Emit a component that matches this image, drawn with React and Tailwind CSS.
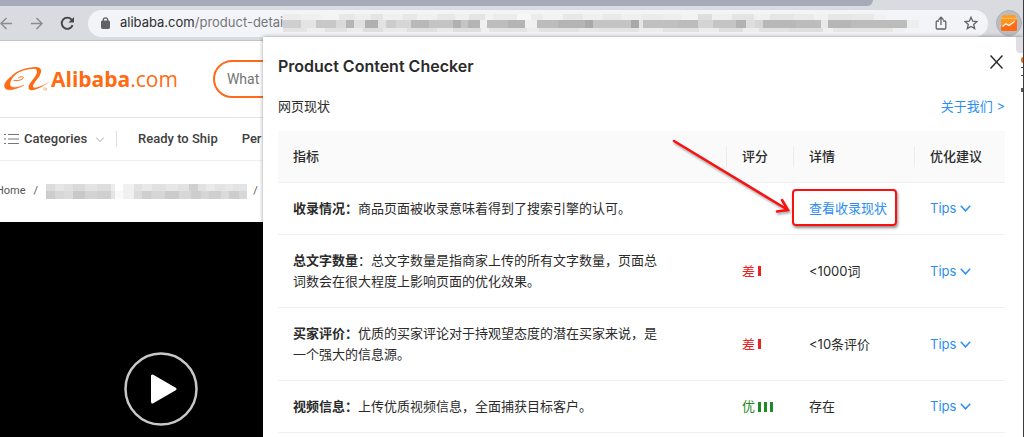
import React from 'react'
import clsx from 'clsx'

// [width, grey] runs of the hidden part of the address
const URL_TOP = [
  [18, 236], [20, 240], [18, 244], [16, 232], [16, 238], [12, 229], [20, 240], [14, 232], [20, 240], [18, 232],
  [14, 240], [16, 228], [8, 242], [24, 236], [14, 247], [12, 236], [20, 242], [20, 232], [20, 240], [18, 233],
  [20, 240], [22, 235], [18, 238], [17, 243], [14, 222], [20, 240], [22, 228], [16, 240], [24, 230], [20, 235],
  [14, 241], [24, 231], [22, 233], [12, 241],
]
const URL_MID = [
  [18, 207], [15, 228], [20, 200], [10, 217], [8, 181], [11, 224], [13, 176], [8, 226], [10, 204], [15, 214],
  [18, 184], [24, 196], [8, 176], [7, 196], [12, 180], [7, 240], [21, 189], [17, 180], [12, 240], [21, 188],
  [27, 180], [8, 170], [38, 196], [8, 168], [4, 229], [35, 192], [20, 188], [15, 212], [23, 196], [10, 178],
  [9, 222], [8, 214], [33, 184], [25, 188], [7, 232], [23, 182], [56, 188], [12, 238],
]
const URL_LOW = [
  [24, 228], [18, 238], [22, 226], [16, 236], [20, 222], [24, 234], [30, 224], [16, 234], [28, 222], [8, 240],
  [38, 228], [12, 236], [40, 226], [20, 232], [40, 228], [24, 236], [36, 226], [20, 236], [24, 222], [16, 238],
  [30, 226], [34, 222], [10, 240], [60, 230], [12, 241],
]
const CRUMB_TOP = [
  [9, 219], [9, 229], [9, 225], [12, 217], [12, 227], [14, 222], [4, 236], [8, 255], [11, 240], [8, 226],
  [10, 232], [14, 225], [12, 230], [11, 226], [9, 208], [8, 225], [9, 234], [10, 227], [8, 231], [14, 228],
]
const CRUMB_LOW = [
  [9, 204], [9, 215], [9, 219], [12, 200], [12, 211], [14, 207], [4, 229], [8, 249], [11, 240], [8, 219],
  [9, 206], [14, 214], [14, 203], [12, 215], [10, 205], [8, 214], [12, 207], [8, 218], [10, 205], [8, 216],
]

const ROWS = [
  { name: '收录情况：', text: '商品页面被收录意味着得到了搜索引擎的认可。', link: '查看收录现状' },
  {
    name: '总文字数量',
    text: '：总文字数量是指商家上传的所有文字数量，页面总词数会在很大程度上影响页面的优化效果。',
    grade: '差',
    bars: 1,
    detail: '<1000词',
  },
  {
    name: '买家评价：',
    text: '优质的买家评论对于持观望态度的潜在买家来说，是一个强大的信息源。',
    grade: '差',
    bars: 1,
    detail: '<10条评价',
  },
  { name: '视频信息：', text: '上传优质视频信息，全面捕获目标客户。', grade: '优', bars: 3, detail: '存在' },
]

function Mosaic({ runs, className }) {
  return (
    <div className={clsx('flex', className)}>
      {runs.map(([width, grey], i) => (
        <span key={i} style={{ width, backgroundColor: `rgb(${grey},${grey},${grey + 1})` }} />
      ))}
    </div>
  )
}

function Toolbar() {
  return (
    <div className="bg-[#d9dbe1] border-b border-[#c3c5ca]">
      <div className="h-[6px] mr-[150px] bg-[#a7abb9] rounded-br-md" />
      <div className="flex items-center h-[34px]">
        <button aria-label="Back" className="text-[#8b8d92]">
          <svg className="w-[13px] h-[13px]" viewBox="0 0 14 14" fill="none" stroke="currentColor" strokeWidth="1.6">
            <path d="M13 7H1M7 1L1 7l6 6" />
          </svg>
        </button>
        <button aria-label="Forward" className="ml-[17px] text-[#8b8d92]">
          <svg className="w-[13px] h-[13px]" viewBox="0 0 14 14" fill="none" stroke="currentColor" strokeWidth="1.6">
            <path d="M1 7h12M7 1l6 6-6 6" />
          </svg>
        </button>
        <button aria-label="Reload" className="ml-[17px] text-[#45474b]">
          <svg className="w-[15px] h-[15px]" viewBox="0 0 15 15" fill="none" stroke="currentColor" strokeWidth="1.9">
            <path d="M12.6 9.2A5.6 5.6 0 1 1 11.6 3.6L13 5" />
            <path d="M14 1v5.6H8.4z" fill="currentColor" stroke="none" />
          </svg>
        </button>
        <div className="flex flex-1 min-w-0 items-center h-[27px] ml-[13px] pl-[13px] pr-2.5 rounded-full bg-[#f3f4f7]">
          <svg className="w-[9px] h-3 shrink-0 text-[#5f6368]" viewBox="0 0 9 12" fill="none" stroke="currentColor">
            <rect x="0.5" y="4" width="8" height="7.5" rx="0.8" fill="currentColor" />
            <path d="M2.3 4.5V3a2.2 2.2 0 0 1 4.4 0v1.5" strokeWidth="1.3" />
          </svg>
          <div className="ml-2.5 shrink-0 text-[13px] text-[#74777b]">
            <span className="text-[#2c2e31]">alibaba.com</span>/product-detai
          </div>
          <div className="flex-1 min-w-0 overflow-hidden">
            <Mosaic runs={URL_TOP} className="h-1.5" />
            <Mosaic runs={URL_MID} className="h-2" />
            <Mosaic runs={URL_LOW} className="h-1" />
          </div>
          <button aria-label="Share" className="ml-2 text-[#5f6368]">
            <svg className="w-3 h-3.5" viewBox="0 0 12 14" fill="none" stroke="currentColor" strokeWidth="1.3">
              <path d="M4 5H2.2Q1.2 5 1.2 6v6q0 1 1 1h7.6q1 0 1-1V6q0-1-1-1H8M6 9V1.3M3.5 3.7L6 1.2l2.5 2.5" />
            </svg>
          </button>
          <button aria-label="Bookmark" className="ml-[17px] text-[#5f6368]">
            <svg className="w-3.5 h-3.5" viewBox="0 0 14 14" fill="none" stroke="currentColor" strokeWidth="1.3">
              <path d="M7 1.3l1.7 3.9 4.2.4-3.2 2.8 1 4.2L7 10.4l-3.7 2.2 1-4.2-3.2-2.8 4.2-.4z" />
            </svg>
          </button>
        </div>
        <button
          aria-label="Product Content Checker"
          className="flex items-center justify-center w-[26px] h-[26px] ml-2 mr-px rounded-full bg-[#bcbcbf] border border-[#afafb3]"
        >
          <svg className="w-4 h-4" viewBox="0 0 16 16">
            <path d="M2 0h12l2 4H0z" fill="#ff9f1f" />
            <rect width="16" height="12" y="3" rx="1" fill="#ff941c" />
            <path d="M0 12l5-3 3 2 6-5 2-1v10q0 1-1 1H1q-1 0-1-1z" fill="#ff6a13" />
            <path d="M0 3.6h16" stroke="#ffc57a" strokeWidth="0.8" />
            <path d="M1.5 11.5L5 8.8l3 1.7 5.8-4.2" fill="none" stroke="#fff" strokeWidth="1.2" />
          </svg>
        </button>
      </div>
    </div>
  )
}

function Storefront() {
  return (
    <div className="flex flex-1 flex-col font-[Roboto,sans-serif]">
      <header className="flex items-center h-[77px] pl-1 border-b border-[#e4e4e6]">
        <a href="#home" className="flex items-center text-[#ff6a12]">
          <svg className="w-[46px] h-[26px]" viewBox="0 0 46 26" fill="none" stroke="currentColor" strokeLinecap="round">
            <path
              d="M12 7.500C5 11-1 17.500.8 21.500c1.700 4.200 11 2.300 19.200-2.500C13 22 6 22.500 6 18.500c0-4 3-8 6-11z"
              fill="currentColor"
              strokeWidth="0.400"
            />
            <path d="M9 9.500C14 5 23 1.500 32 2" strokeWidth="1.500" />
            <path d="M10 14.500c4 .5 8.500-.5 9.500-3-1-1.300-3.500-.8-5 .3" strokeWidth="1" />
            <path
              d="M28 1.200C36 0 39 3 36 9c-2.500 4.500-6.500 8-7 11-.4 3.500 7 1.500 16.500-4.500C36 23.500 24.500 27 24.500 21.500c0-4 6-9 8-13.500 1.300-3.500 0-5.500-4.500-6.800z"
              fill="currentColor"
              stroke="none"
            />
            <circle cx="41" cy="23" r="1.300" strokeWidth="0.600" strokeOpacity="0.700" />
          </svg>
          <span className="ml-px text-[21px] leading-6 font-['Open_Sans',sans-serif]">
            <b>Alibaba</b>.com
          </span>
        </a>
        <input
          type="text"
          aria-label="Search products"
          placeholder="What"
          className="flex-1 min-w-0 h-[38px] ml-[35px] pl-3 rounded-l-full border-2 border-[#ff6a1a] text-sm placeholder:text-[#747474]"
        />
      </header>
      <nav className="flex items-center h-[43px] pl-1 border-b border-[#f0f0f1] text-[13px] font-medium text-[#404040]">
        <button className="flex items-center">
          <svg className="w-[15px] h-3 text-[#777]" viewBox="0 0 15 12" stroke="currentColor">
            <path d="M0 1.500h2M4 1.500h11M0 6h2M4 6h11M0 10.500h2M4 10.500h11" />
          </svg>
          <span className="ml-[5px]">Categories</span>
          <svg className="w-2 h-[5px] ml-[9px]" viewBox="0 0 8 5" fill="none" stroke="#a5a8ad">
            <path d="M0 .5l4 4 4-4" />
          </svg>
        </button>
        <span className="w-px h-4 ml-3 bg-[#dddde4]" />
        <a href="#ready" className="ml-[21px]">Ready to Ship</a>
        <a href="#personal" className="ml-6">Per</a>
      </nav>
      <div className="flex items-center h-[61px] -ml-1 text-[11px] text-[#555]">
        <a href="#home">Home</a>
        <span className="ml-2">/</span>
        <div className="ml-2">
          <Mosaic runs={CRUMB_TOP} className="h-[7px]" />
          <Mosaic runs={CRUMB_LOW} className="h-2" />
        </div>
        <span className="ml-1.5">/</span>
      </div>
      <div className="flex-1 w-[700px] max-w-full pt-[130px] pl-[124px] bg-black">
        <button aria-label="Play video" className="block">
          <svg className="w-[74px] h-[74px]" viewBox="0 0 74 74">
            <circle cx="37" cy="37" r="35.500" fill="none" stroke="#c8c8c8" strokeWidth="2.500" />
            <path d="M28.500 24v26L51 37z" fill="#fff" stroke="#fff" strokeWidth="3" strokeLinejoin="round" />
          </svg>
        </button>
      </div>
    </div>
  )
}

function Score({ grade, bars }) {
  return (
    <span className={clsx('flex items-center', bars > 1 ? 'text-[#1f8b24]' : 'text-[#ea2424]')}>
      {grade}
      <span className="flex gap-[3px] ml-[3px]">
        {Array.from({ length: bars }, (_, i) => (
          <span key={i} className="w-[3px] h-2.5 bg-current" />
        ))}
      </span>
    </span>
  )
}

// red frame and arrow pointing at the link
function Callout() {
  return (
    <>
      <span className="absolute -left-[17px] -right-2.5 -top-[9px] -bottom-[7px] rounded border-2 border-[#fb1010] shadow-[1px_2px_3px_rgba(0,0,0,0.45)] pointer-events-none" />
      <svg
        className="absolute right-full bottom-1/2 w-[118px] h-[76px] mr-[19px] -mb-1.5 drop-shadow-[1px_2px_1px_rgba(0,0,0,0.35)] pointer-events-none"
        viewBox="0 0 118 76"
        fill="none"
        stroke="#fb1010"
        strokeWidth="2.500"
        strokeLinecap="round"
      >
        <path d="M2 2l114 69M110 61l6 10-11 1.500" />
      </svg>
    </>
  )
}

function HeadCell({ children, divided, className }) {
  return (
    <th className={clsx('py-[15px] text-left font-medium', className)}>
      <div className={clsx('flex items-center', divided ? 'pl-[15px] border-l border-[#ececec]' : 'px-[15px]')}>
        {children}
      </div>
    </th>
  )
}

function CheckerPanel() {
  return (
    <section className="absolute left-[263px] right-0 top-[37px] bottom-0 pl-[15px] pr-[18px] overflow-hidden bg-white shadow-[0_0_4px_rgba(0,0,0,0.4)] text-[13px] leading-[21px] text-[#2b2b2b] font-[Inter,'Noto_Sans_CJK_SC',sans-serif]">
      <div className="flex items-center justify-between pt-[17px]">
        <h1 className="text-base leading-6 font-semibold">Product Content Checker</h1>
        <button aria-label="Close" className="mr-0.5 mb-2">
          <svg className="w-[13px] h-[14px]" viewBox="0 0 13 14" stroke="#2b2b2b" strokeWidth="1.500">
            <path d="M.5.500l12 13M12.500.500l-12 13" />
          </svg>
        </button>
      </div>
      <div className="flex justify-between mt-[18px]">
        <h2>网页现状</h2>
        <a href="#about" className="text-[#2b8ef5]">关于我们 &gt;</a>
      </div>
      <table className="w-full mt-3.5 table-fixed border-collapse">
        <thead>
          <tr className="bg-[#fafafa] border-b border-[#f0f0f0]">
            <HeadCell>指标</HeadCell>
            <HeadCell divided className="w-[67px]">评分</HeadCell>
            <HeadCell divided className="w-[121px]">详情</HeadCell>
            <HeadCell divided className="w-[91px]">优化建议</HeadCell>
          </tr>
        </thead>
        <tbody>
          {ROWS.map(row => (
            <tr key={row.name} className="border-b border-[#f0f0f0]">
              <td className="px-[15px] py-[15px]">
                <p className="max-w-[376px]">
                  <b className="font-bold">{row.name}</b>
                  {row.text}
                </p>
              </td>
              <td className="pl-4">{row.grade && <Score grade={row.grade} bars={row.bars} />}</td>
              <td className="pl-4">
                {row.link ? (
                  <a href="#index" className="relative inline-block text-[#2b8ef5]">
                    {row.link}
                    <Callout />
                  </a>
                ) : (
                  row.detail
                )}
              </td>
              <td className="pl-4">
                <button className="flex items-center text-[#2b8ef5]">
                  Tips
                  <svg className="w-[11px] h-[7px] ml-1" viewBox="0 0 11 7" fill="none" stroke="currentColor" strokeWidth="1.500">
                    <path d="M.8.800l4.700 5 4.700-5" />
                  </svg>
                </button>
              </td>
            </tr>
          ))}
        </tbody>
      </table>
    </section>
  )
}

export default function App() {
  return (
    <main className="relative flex flex-col min-h-screen overflow-hidden bg-white border-r border-[#3a3d40] font-[Inter,sans-serif]">
      <Toolbar />
      <Storefront />
      <CheckerPanel />
      {/* sliver of the window behind */}
      <div className="absolute right-0 top-[37px] flex flex-col items-end">
        <span className="w-[7px] h-4 rounded-bl bg-[#e0dde4]" />
        <span className="w-0.5 h-1.5 mt-1 rounded-l-full bg-[#f26a1b]" />
        <span className="w-0.5 h-px mt-1 bg-[#444]" />
        <span className="w-0.5 h-px mt-[7px] bg-[#444]" />
        <span className="w-0.5 h-1 mt-3 bg-[#555]" />
      </div>
    </main>
  )
}
